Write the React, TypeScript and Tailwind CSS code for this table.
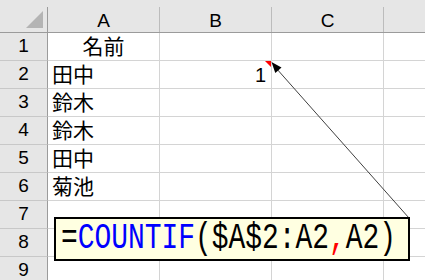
import React from 'react';

type Row = { a?: string; b?: string; center?: boolean };

const rows: Row[] = [
  { a: '名前', center: true },
  { a: '田中', b: '1' },
  { a: '鈴木' },
  { a: '鈴木' },
  { a: '田中' },
  { a: '菊池' },
  {},
  {},
  {},
];

const latin = "font-['Liberation_Sans',Arial,sans-serif]";
const cjk = "font-['Liberation_Sans','Noto_Sans_CJK_JP',sans-serif]";

const HeaderCell: React.FC<{ label?: string; last?: boolean }> = ({ label, last }) => (
  <div className="bg-[#e6e6e6] pt-[7px] border-b border-[#9b9b9b]">
    <div
      className={`h-full flex items-center justify-center pt-[3px] text-[19px] text-black ${latin} ${
        last ? '' : 'border-r border-[#bcbcbc]'
      }`}
    >
      {label}
    </div>
  </div>
);

const App: React.FC = () => {
  return (
    <div className="relative w-[425px] h-[280px] overflow-hidden bg-white">
      <div className="grid grid-cols-[48px_112px_112px_112px_1fr] grid-rows-[33px_repeat(9,28px)]">
        {/* corner */}
        <div className="bg-[#e6e6e6] pt-[7px] border-b border-[#9b9b9b]">
          <div className="h-full border-r border-[#9b9b9b] relative">
            <svg className="absolute left-[26px] top-[4px]" width="18" height="18" viewBox="0 0 18 18">
              <polygon points="17,0 17,17 0,17" fill="#b4b4b4" />
            </svg>
          </div>
        </div>
        <HeaderCell label="A" />
        <HeaderCell label="B" />
        <HeaderCell label="C" />
        <HeaderCell last />

        {rows.map((row, i) => (
          <React.Fragment key={i}>
            <div
              className={`bg-[#e6e6e6] border-r border-b border-r-[#9b9b9b] border-b-[#c8c8c8] flex items-center justify-center text-[19px] text-black ${latin}`}
            >
              {i + 1}
            </div>
            <div
              className={`border-r border-b border-[#d4d4d4] flex items-center px-[4px] text-[21px] text-black ${cjk} ${
                row.center ? 'justify-center' : ''
              }`}
            >
              {row.a}
            </div>
            <div
              className={`border-r border-b border-[#d4d4d4] flex items-center justify-end pr-[5px] text-[20px] text-black ${latin}`}
            >
              {row.b}
            </div>
            <div className="border-r border-b border-[#d4d4d4]" />
            <div className="border-b border-[#d4d4d4]" />
          </React.Fragment>
        ))}
      </div>

      {/* comment marker and leader arrow */}
      <svg className="absolute inset-0 pointer-events-none" width="425" height="280" viewBox="0 0 425 280">
        <polygon points="265,61 271,61 271,67" fill="#ff0000" />
        <line x1="409" y1="218" x2="276" y2="68" stroke="#404040" strokeWidth="1" />
        <polygon points="271.5,62 275.3,73 281.5,67.5" fill="#000" />
      </svg>

      {/* comment box */}
      <div className="absolute left-[54px] top-[217px] w-[356px] h-[44px] border-2 border-black bg-[#ffffe1] overflow-hidden">
        <div className="pl-[5px] h-full flex items-center">
          <span className="inline-block origin-left scale-x-[0.775] whitespace-nowrap text-[36px] leading-none text-black font-['Liberation_Mono',monospace]">
            =<span className="text-[#0000ff]">COUNTIF</span>($A$2:A2<span className="text-[#ff0000]">,</span>A2)
          </span>
        </div>
      </div>
    </div>
  );
};

export default App;
